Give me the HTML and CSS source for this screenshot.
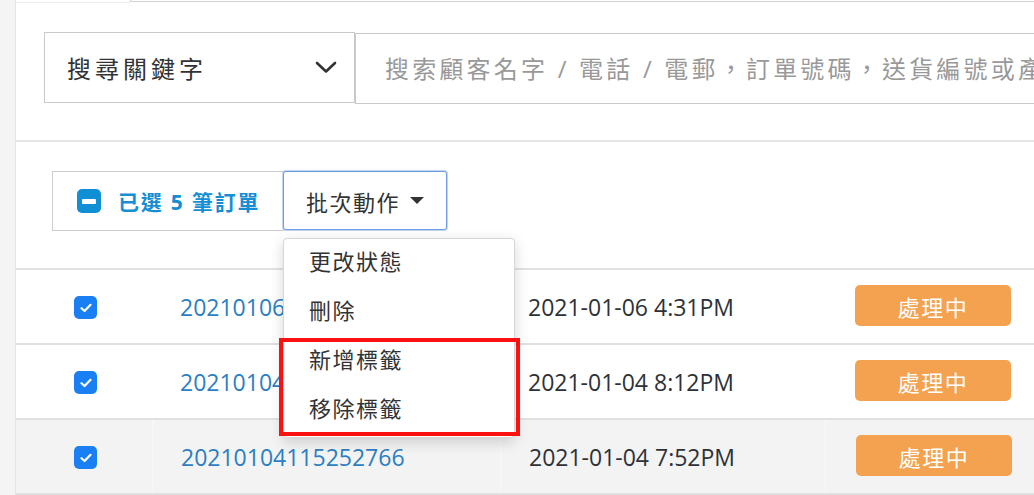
FILE: index.html
```html
<!DOCTYPE html>
<html>
<head>
	<title>訂單管理</title>
	<link rel="stylesheet" href="styles.css">
</head>
<body>
	<div class="side"></div>
	<div class="main">
		<div class="tabs">
			<div class="tab-active"></div>
			<div class="tab-rest"></div>
		</div>

		<div class="search">
			<div class="select">
				<span>搜尋關鍵字</span>
				<svg class="chevron" width="22" height="13" viewBox="0 0 22 13"><path d="M2 2 L11 10.5 L20 2" fill="none" stroke="#333" stroke-width="2.6" stroke-linecap="round" stroke-linejoin="round"/></svg>
			</div>
			<input class="keyword" type="text" placeholder="搜索顧客名字 / 電話 / 電郵，訂單號碼，送貨編號或產品名稱">
		</div>

		<div class="bulk">
			<div class="bulk-group">
				<div class="selected">
					<span class="minus"><span class="bar"></span></span>
					<span>已選 5 筆訂單</span>
				</div>
				<button class="action">批次動作 <span class="caret"></span></button>

				<div class="menu">
					<div class="menu-item">更改狀態</div>
					<div class="menu-item">刪除</div>
					<div class="menu-item">新增標籤</div>
					<div class="menu-item">移除標籤</div>
					<div class="highlight"></div>
				</div>
			</div>
		</div>

		<div class="orders">
			<div class="row">
				<div class="cell c-check"><span class="check"><svg width="12" height="10" viewBox="0 0 12 10"><path d="M1.5 5.2 L4.6 8 L10.5 1.8" fill="none" stroke="#fff" stroke-width="2.2" stroke-linecap="round" stroke-linejoin="round"/></svg></span></div>
				<div class="cell c-num"><a href="#">20210106163155012</a></div>
				<div class="cell c-date">2021-01-06 4:31PM</div>
				<div class="cell c-status"><span class="badge">處理中</span></div>
			</div>
			<div class="row">
				<div class="cell c-check"><span class="check"><svg width="12" height="10" viewBox="0 0 12 10"><path d="M1.5 5.2 L4.6 8 L10.5 1.8" fill="none" stroke="#fff" stroke-width="2.2" stroke-linecap="round" stroke-linejoin="round"/></svg></span></div>
				<div class="cell c-num"><a href="#">20210104201240318</a></div>
				<div class="cell c-date">2021-01-04 8:12PM</div>
				<div class="cell c-status"><span class="badge">處理中</span></div>
			</div>
			<div class="row hover">
				<div class="cell c-check"><span class="check"><svg width="12" height="10" viewBox="0 0 12 10"><path d="M1.5 5.2 L4.6 8 L10.5 1.8" fill="none" stroke="#fff" stroke-width="2.2" stroke-linecap="round" stroke-linejoin="round"/></svg></span></div>
				<div class="cell c-num"><a href="#">20210104115252766</a></div>
				<div class="cell c-date">2021-01-04 7:52PM</div>
				<div class="cell c-status"><span class="badge">處理中</span></div>
			</div>
		</div>
	</div>
</body>
</html>
```

FILE: styles.css
```css
body { margin: 0; padding: 0; display: flex; overflow: hidden; height: 495px; background: #fff;
	font-family: "Open Sans", "Noto Sans CJK TC", sans-serif; color: #333; }

.side { width: 15px; flex-shrink: 0; background: #f4f4f4; border-right: 1px solid #e4e4e4; }
.main { flex: 1; min-width: 0; overflow: hidden; }

/* tab strip at the very top */
.tabs { display: flex; height: 3px; }
.tab-active { width: 114px; border-bottom: 1px solid #ececec; }
.tab-rest { flex: 1; height: 1px; border-bottom: 1px solid #d2d2d2; border-left: 1px solid #d2d2d2; }

/* search row */
.search { display: flex; align-items: flex-start; padding: 29px 0 36px 28px; border-bottom: 2px solid #e6e6e6; }
.select { width: 311px; height: 71px; box-sizing: border-box; border: 1px solid #c9c9c9; display: flex; align-items: center;
	justify-content: space-between; padding: 0 17px 0 22px; font-size: 24px; letter-spacing: 4px; color: #333; flex-shrink: 0; }
.chevron { display: block; }
.keyword { width: 820px; height: 71px; box-sizing: border-box; margin: 1px 0 0 0; border: 1px solid #c9c9c9; flex-shrink: 0;
	padding: 0 0 0 29px; font-family: inherit; font-size: 24px; letter-spacing: 3.2px; outline: none; }
.keyword::placeholder { color: #999; }

/* bulk actions */
.bulk { padding: 29px 0 37px 36px; }
.bulk-group { display: flex; position: relative; }
.selected { width: 232px; height: 60px; box-sizing: border-box; border: 1px solid #cdcdcd; border-right: none; display: flex;
	align-items: center; padding-left: 24px; gap: 17px; color: #168ed4; font-weight: bold; font-size: 21px; letter-spacing: 1.8px; }
.minus { width: 24px; height: 24px; border-radius: 5px; background: #118fd5; display: flex; align-items: center; justify-content: center; }
.bar { width: 14px; height: 5px; border-radius: 1px; background: #fff; }
.action { width: 164px; height: 59px; margin-left: -1px; box-sizing: border-box; background: #fff; border: 1px solid #6f9de2;
	border-radius: 3px; box-shadow: 0 0 0 1px rgba(120, 160, 225, 0.45); font-family: inherit; font-size: 22px; letter-spacing: 1.5px;
	color: #333; text-align: left; padding: 0 0 0 22px; display: flex; align-items: center; }
.caret { display: inline-block; margin-left: 10px; border-left: 7px solid transparent; border-right: 7px solid transparent; border-top: 7px solid #333; }

.menu { position: absolute; left: 231px; top: 67px; width: 232px; box-sizing: border-box; background: #fff; border: 1px solid #d6d6d6;
	border-radius: 4px; box-shadow: 0 4px 14px rgba(0, 0, 0, 0.16); padding: 0 0 2px 0; z-index: 5; }
.menu-item { height: 49px; line-height: 45px; padding-left: 25px; font-size: 22px; letter-spacing: 1.5px; color: #333; }
.highlight { position: absolute; left: -5px; top: 99px; width: 241px; height: 98px; box-sizing: border-box; border: 4px solid #fa1212; }

/* order rows */
.orders { border-top: 2px solid #e2e2e2; }
.row { display: grid; grid-template-columns: 136px 348px 325px 1fr; height: 75px; box-sizing: border-box; border-bottom: 2px solid #e0e0e0; }
.row.hover { background: #f3f3f3; }
.row.hover .cell + .cell { border-left: 1px solid #f8f8f8; }
.cell { display: flex; align-items: center; font-size: 23px; }
.c-check { padding-left: 58px; }
.c-num { padding-left: 28px; }
.c-date { padding-left: 28px; color: #2d3238; }
.c-status { padding-left: 30px; }
.c-num a { color: #2b7fc2; text-decoration: none; }
.check { width: 23px; height: 23px; border-radius: 5px; background: #1a7ff2; display: flex; align-items: center; justify-content: center; margin-top: 2px; }
.check svg { display: block; }
.badge { width: 156px; height: 41px; border-radius: 5px; background: #f4a24f; color: #fff; display: flex; align-items: center; justify-content: center;
	font-size: 22px; letter-spacing: 1.5px; margin-top: -2px; }
```
